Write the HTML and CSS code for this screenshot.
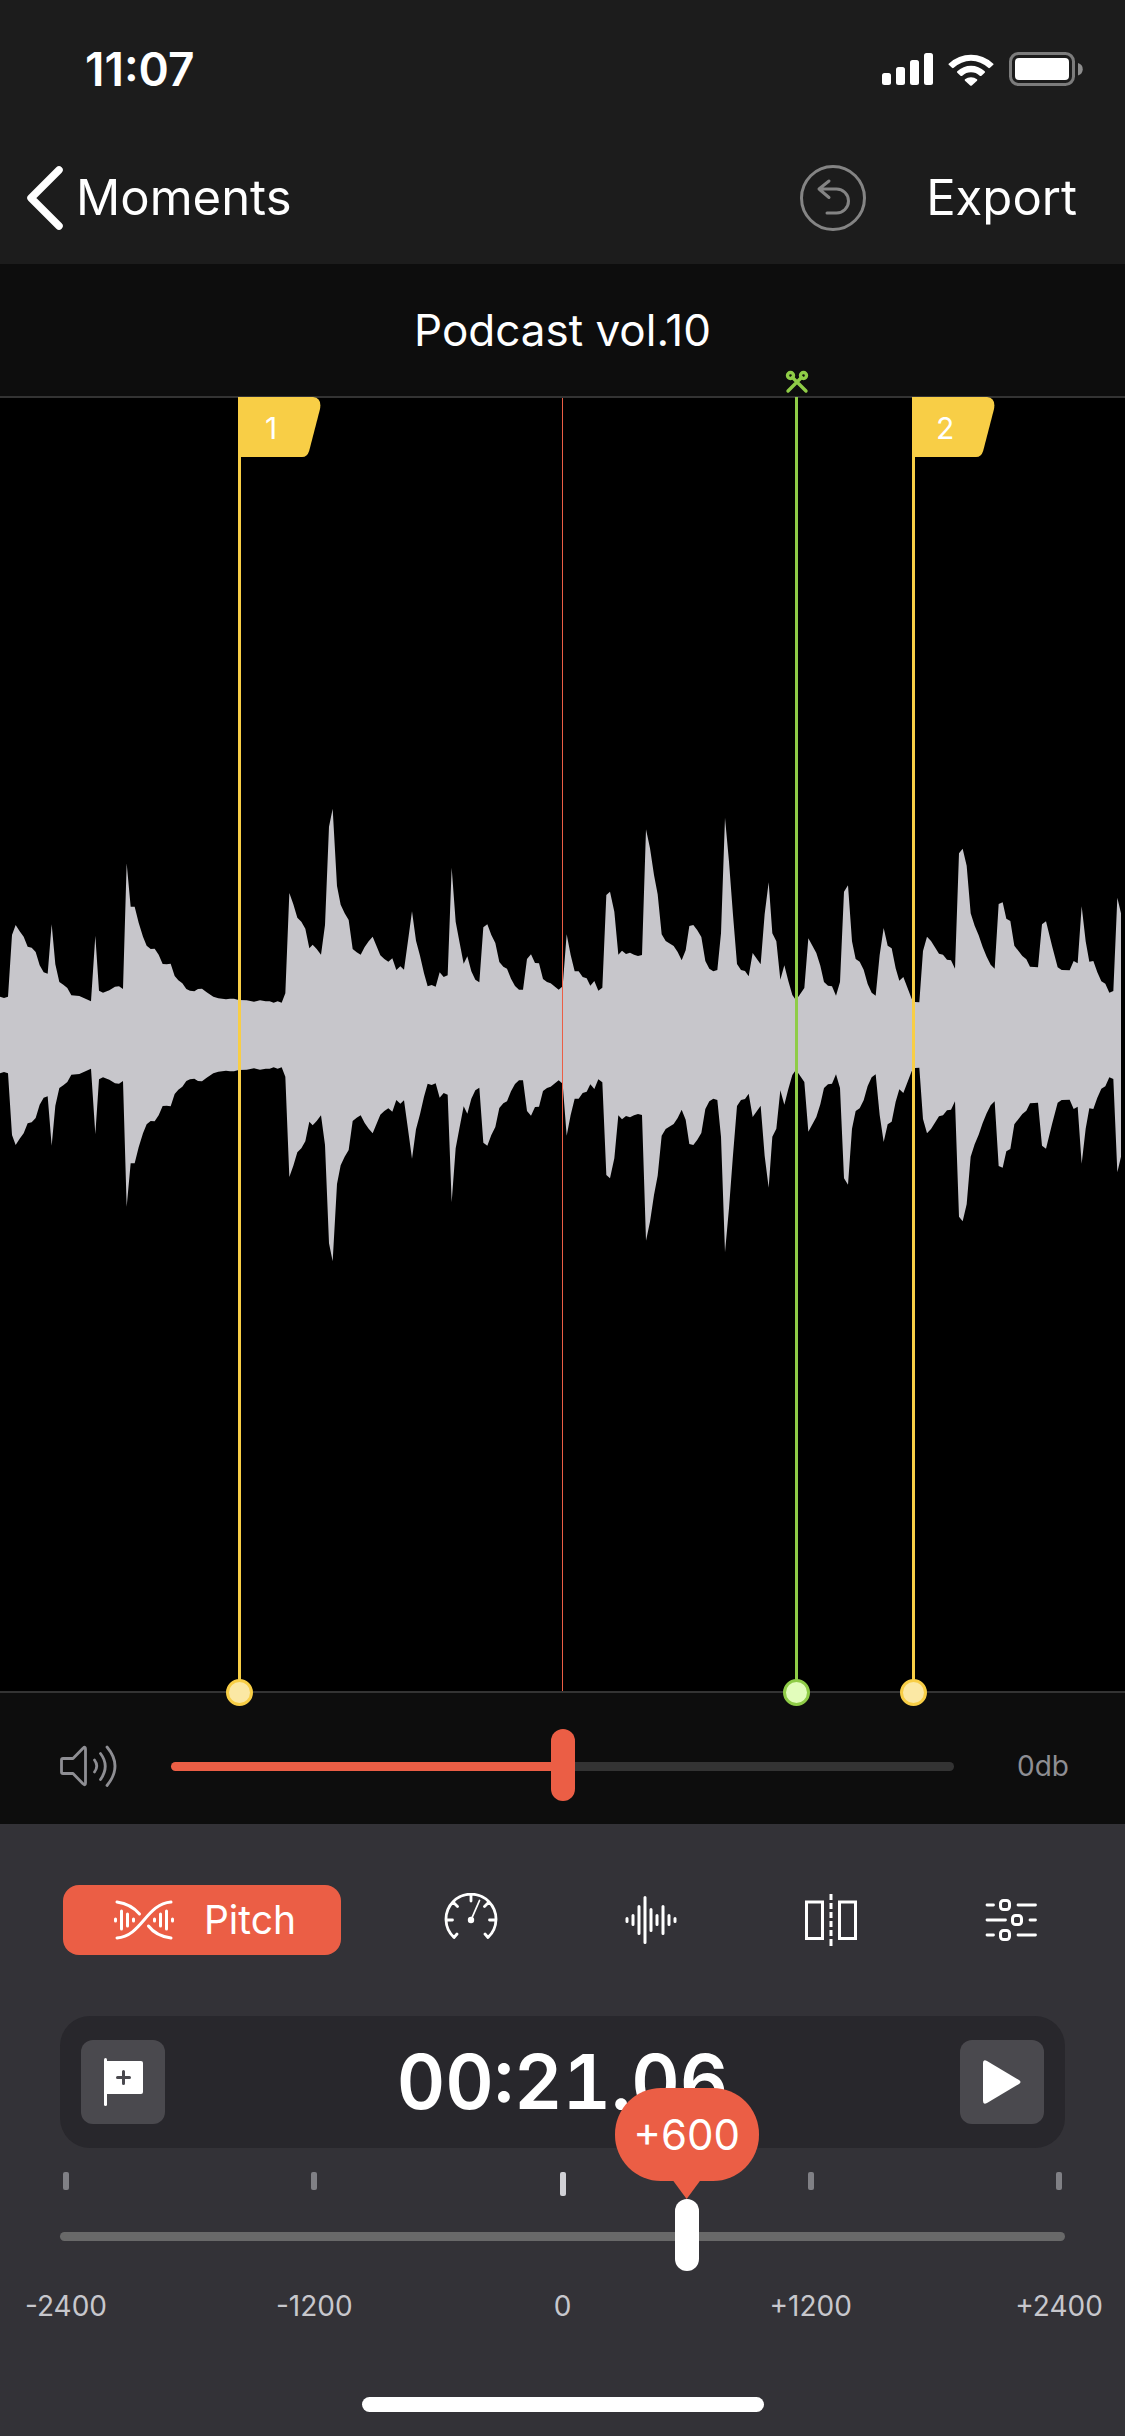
FILE: index.html
```html
<!DOCTYPE html>
<html lang="en">
<head>
<meta charset="utf-8">
<meta name="viewport" content="width=device-width, initial-scale=1">
<title>Podcast vol.10</title>
<link rel="stylesheet" href="styles.css">
</head>
<body>
<div class="app">
  <header class="top">
    <div class="status">
      <span class="clock">11:07</span>
      <div class="status-icons">
        <svg width="51" height="32" viewBox="0 0 51 32" fill="#fff" aria-hidden="true">
          <rect x="0" y="20" width="9" height="12" rx="2.5"/><rect x="14" y="14" width="9" height="18" rx="2.5"/><rect x="28" y="7" width="9" height="25" rx="2.5"/><rect x="42" y="0" width="9" height="32" rx="2.5"/>
        </svg>
        <svg width="46" height="33" viewBox="0 0 46 33" fill="#fff" aria-hidden="true">
          <path d="M1 10.500A32 32 0 0 1 45 10.500Q46 11.200 45 12L42 14.800Q41 15.500 40.300 14.800A25 25 0 0 0 5.700 14.800Q5 15.500 4 14.800L1 12Q0 11.200 1 10.500Z"/>
          <path d="M9.300 18.300A20 20 0 0 1 36.700 18.300Q37.500 19 36.700 19.800L33.500 22.700Q32.500 23.500 31.700 22.700A13 13 0 0 0 14.300 22.700Q13.500 23.500 12.500 22.700L9.300 19.800Q8.500 19 9.300 18.300Z"/>
          <path d="M17 26.300A9.500 9.500 0 0 1 29 26.300Q29.800 27 29 27.800L23.800 32.400Q23 33 22.200 32.400L17 27.800Q16.200 27 17 26.300Z"/>
        </svg>
        <svg width="74" height="34" viewBox="0 0 74 34" aria-hidden="true">
          <rect x="1.500" y="1.500" width="63" height="31" rx="8" fill="none" stroke="#7c7c7c" stroke-width="3"/><rect x="6" y="6" width="54" height="22" rx="4" fill="#fff"/><path d="M69 11a6.500 6.500 0 0 1 0 12.500Z" fill="#8d8d8d"/>
        </svg>
      </div>
    </div>
    <nav class="nav">
      <a class="back" href="#">
        <svg width="38" height="64" viewBox="0 0 38 64" fill="none" stroke="#fff" stroke-width="7.500" stroke-linecap="round" stroke-linejoin="round" aria-hidden="true"><path d="M33 4L5 32L33 60"/></svg>
        <span>Moments</span>
      </a>
      <div class="nav-actions">
        <button class="undo" type="button" aria-label="Undo">
          <svg width="66" height="66" viewBox="0 0 66 66" fill="none" stroke="#848484" stroke-width="3" stroke-linecap="round" stroke-linejoin="round"><circle cx="33" cy="33" r="31.500"/><path d="M29 16L19 24L29 32.500M19 24H36.500A12 12 0 0 1 36.500 48H27"/></svg>
        </button>
        <button class="export" type="button">Export</button>
      </div>
    </nav>
  </header>

  <h1 class="title">Podcast vol.10</h1>

  <main class="wave">
    <svg class="wave-shape" viewBox="0 0 3375 3879" preserveAspectRatio="none" fill="#c7c6cb" aria-hidden="true">
      <defs>
        <polygon id="envelope" points="0,766 0,650 12,654 24,650 36,465 47,435 59,454 71,470 83,500 95,503 107,516 119,556 131,577 143,581 155,433 166,553 178,606 190,614 202,624 214,646 238,648 273,664 286,467 297,632 309,638 328,631 345,620 357,619 369,627 380,250 392,380 404,380 416,428 429,470 440,497 452,507 464,506 476,524 488,552 500,553 512,551 524,588 535,601 547,610 559,627 570,632 583,634 594,627 606,626 620,637 640,650 655,655 678,658 690,656 702,656 716,660 740,661 762,665 780,661 797,664 809,664 821,668 833,664 845,668 856,640 868,339 880,373 892,413 904,425 916,446 928,505 938,494 950,507 963,524 975,435 987,140 998,86 1011,318 1022,374 1034,400 1046,420 1058,507 1070,517 1082,524 1094,501 1106,484 1118,470 1141,526 1153,537 1165,545 1177,535 1189,570 1201,559 1212,569 1224,482 1236,394 1248,482 1260,527 1272,580 1283,619 1295,615 1307,620 1319,577 1331,591 1343,586 1355,263 1367,425 1379,489 1391,551 1402,529 1414,574 1426,599 1438,607 1450,442 1462,433 1474,465 1486,489 1498,546 1510,560 1521,566 1533,596 1545,618 1557,629 1569,629 1581,537 1593,523 1605,549 1617,550 1629,597 1641,606 1652,610 1676,629 1688,619 1700,463 1712,525 1724,574 1736,574 1748,591 1760,595 1771,617 1783,603 1795,632 1807,623 1819,345 1830,335 1843,395 1855,524 1866,512 1878,522 1890,518 1902,524 1914,528 1926,525 1938,148 1950,205 1962,285 1973,343 1985,463 1997,483 2021,498 2033,516 2045,541 2057,511 2068,438 2080,435 2092,451 2104,471 2116,543 2128,566 2140,574 2152,570 2163,460 2175,113 2187,245 2199,405 2211,552 2223,570 2235,573 2246,589 2258,519 2282,553 2294,402 2306,307 2317,460 2329,484 2341,599 2353,556 2365,603 2377,645 2385,656 2395,650 2413,624 2425,475 2449,519 2461,557 2472,606 2484,617 2496,619 2508,647 2520,606 2532,335 2544,316 2556,484 2567,537 2579,545 2591,569 2603,612 2615,638 2627,647 2639,525 2651,444 2663,497 2675,505 2687,565 2698,602 2710,591 2735,656 2745,666 2758,667 2769,513 2781,470 2793,483 2817,521 2829,524 2841,539 2853,541 2865,566 2877,220 2888,206 2900,257 2912,400 2924,437 2936,466 2948,501 2960,530 2972,554 2984,566 2996,372 3008,367 3019,416 3031,423 3043,497 3067,528 3079,538 3090,560 3114,562 3126,433 3138,424 3156,497 3173,562 3185,570 3209,571 3221,543 3233,550 3245,379 3257,484 3268,545 3280,543 3292,577 3304,604 3316,611 3328,638 3340,633 3352,353 3363,400 3363,766"/>
      </defs>
      <use href="#envelope" transform="translate(0 1146)"/>
      <use href="#envelope" transform="translate(0 2676) scale(1 -1)"/>
    </svg>
    <div class="playhead"></div>
    <div class="marker moment" style="left:21.16%">
      <svg class="flag" width="83" height="60" viewBox="0 0 84 60" preserveAspectRatio="none" aria-hidden="true"><path d="M0 0H76Q85 1 83 12L72 54Q70 60 65 60H0Z" fill="#f8ce46"/></svg>
      <span class="flag-number">1</span>
    </div>
    <div class="marker cut" style="left:70.67%">
      <svg class="scissors" width="24" height="24" viewBox="0 0 24 24" fill="none" stroke="#8fcc47" stroke-width="3.400" stroke-linecap="round" aria-hidden="true"><circle cx="5.500" cy="5.500" r="3"/><circle cx="18.500" cy="5.500" r="3"/><path d="M7.500 7.500L21 21M16.500 7.500L3 21"/></svg>
    </div>
    <div class="marker moment" style="left:81.07%">
      <svg class="flag" width="83" height="60" viewBox="0 0 84 60" preserveAspectRatio="none" aria-hidden="true"><path d="M0 0H76Q85 1 83 12L72 54Q70 60 65 60H0Z" fill="#f8ce46"/></svg>
      <span class="flag-number">2</span>
    </div>
  </main>

  <section class="volume">
    <label for="volume" aria-label="Volume">
      <svg width="57" height="42" viewBox="0 0 57 42" fill="none" stroke="#8e8e93" stroke-width="2.800" stroke-linecap="round" stroke-linejoin="round"><path d="M3 13.500H13L23 3.200Q25.500 1 25.500 4V38Q25.500 41 23 38.800L13 28.500H3Q1.500 28.500 1.500 27V15Q1.500 13.500 3 13.500Z"/><path d="M34.500 15Q39 21 34.500 27M40.500 8.500Q50 21 40.500 34.500M47 2Q63 21 47 40.500"/></svg>
    </label>
    <input id="volume" class="range range-volume" type="range" min="0" max="100" value="50">
    <output class="db" for="volume">0db</output>
  </section>

  <section class="editor">
    <div class="tools">
      <button class="tool tool-active" type="button">
        <svg width="60" height="42" viewBox="0 0 60 42" fill="none" stroke="#fff" stroke-width="3" stroke-linecap="round" aria-hidden="true"><path d="M3 3Q17 5 25.500 15M3 39C28 37 32 5 57 3M57 39Q42 37 34.500 27M1.500 20V22M7.500 12V30M13.500 15V27M19.500 20V22M40.500 20V22M46.500 15V27M52.500 12V30M58.500 20V22"/></svg>
        <span>Pitch</span>
      </button>
      <button class="tool" type="button" aria-label="Speed">
        <svg width="54" height="54" viewBox="0 0 54 54" fill="none" stroke="#fff" stroke-width="2.800" stroke-linecap="round" stroke-linejoin="round"><path d="M13 41L10 44.500A25 25 0 1 1 44 44.500L41 41M2 27H8.500M52 27H45.500M27 2V8M9.500 9.500L13.500 13.500M44.500 9.500L40.500 13.500"/><path d="M27 27L35.500 7.500" stroke-width="1.800"/><circle cx="27" cy="27" r="3.200" fill="#fff" stroke="none"/></svg>
      </button>
      <button class="tool" type="button" aria-label="Volume envelope">
        <svg width="54" height="54" viewBox="0 0 54 54" fill="none" stroke="#fff" stroke-width="3" stroke-linecap="round"><path d="M3 25.500V28.500M9 22.500V31.500M15 13.500V40.500M21 4.500V49.500M27 16.500V37.500M33 22.500V31.500M39 13.500V40.500M45 22.500V31.500M51 25.500V28.500"/></svg>
      </button>
      <button class="tool" type="button" aria-label="Split">
        <svg width="54" height="54" viewBox="0 0 54 54" fill="none" stroke="#fff" stroke-width="3"><rect x="2.500" y="9" width="16" height="36.500"/><rect x="35.500" y="9" width="16" height="36.500"/><path d="M27 1V7M27 10V16M27 19V25M27 28V34M27 37V43M27 46V53"/></svg>
      </button>
      <button class="tool" type="button" aria-label="Equalizer">
        <svg width="54" height="54" viewBox="0 0 54 54" fill="none" stroke="#fff" stroke-width="2.800" stroke-linecap="round"><path d="M3 12H9.500M34 12H51.500M3 27H21.500M46 27H51.500M3 42H9.500M34 42H51.500"/><g stroke-width="3"><rect x="16.500" y="7.500" width="9" height="9" rx="3"/><rect x="28.500" y="22.500" width="9" height="9" rx="3"/><rect x="16.500" y="37.500" width="9" height="9" rx="3"/></g></svg>
      </button>
    </div>

    <div class="transport">
      <button class="square" type="button" aria-label="Add moment">
        <svg width="36" height="48" viewBox="0 0 36 48" aria-hidden="true"><rect x="-1" y="0" width="3" height="48" rx="1.500" fill="#fff"/><path d="M0 3H36Q38 3 38 5V34Q38 36 36 36H0Z" fill="#fff"/><path d="M12.500 19.500H24.500M18.500 13.500V25.500" stroke="#4a494e" stroke-width="3" stroke-linecap="round"/></svg>
      </button>
      <time class="time">00:21.06</time>
      <button class="square" type="button" aria-label="Play">
        <svg class="play" width="38" height="44" viewBox="0 0 38 44" fill="#fff" aria-hidden="true"><path d="M0 3Q0-1 4 1L36 20Q39 22 36 24L4 43Q0 45 0 41Z"/></svg>
      </button>
    </div>

    <div class="ticks"><i></i><i></i><i class="tick-zero"></i><i></i><i></i></div>

    <div class="pitch">
      <span class="pitch-track"></span>
      <input class="range range-pitch" type="range" min="-2400" max="2400" step="1" value="600" aria-label="Pitch in cents">
      <div class="bubble-rail"><output class="bubble" style="left:62.5%">+600</output></div>
    </div>

    <div class="scale"><span>-2400</span><span>-1200</span><span>0</span><span>+1200</span><span>+2400</span></div>
    <div class="home"></div>
  </section>
</div>
</body>
</html>
```
FILE: styles.css
```css
*,
*::before,
*::after {
  box-sizing: border-box;
}

body {
  margin: 0;
  background: #0d0d0d;
  color: #fff;
  font-family: Inter, "Liberation Sans", sans-serif;
}

button {
  margin: 0;
  padding: 0;
  border: 0;
  background: none;
  color: inherit;
  font: inherit;
}

svg {
  display: block;
  flex: none;
}

.app {
  display: flex;
  flex-direction: column;
  min-height: 100vh;
}

.top {
  background: #1c1c1c;
}

.status {
  display: flex;
  align-items: center;
  justify-content: space-between;
  height: 132px;
  padding: 6px 42px 0 85px;
}

.clock {
  font-size: 46px;
  font-weight: 600;
  line-height: 56px;
}

.status-icons {
  display: flex;
  align-items: center;
  gap: 15px;
}

.nav {
  display: flex;
  align-items: center;
  justify-content: space-between;
  height: 132px;
  padding: 0 48px 0 26px;
  font-size: 49px;
  line-height: 60px;
}

.back {
  display: flex;
  align-items: center;
  gap: 12px;
  color: #fff;
  text-decoration: none;
}

.nav-actions {
  display: flex;
  align-items: center;
  gap: 60px;
}

.title {
  display: flex;
  align-items: center;
  justify-content: center;
  height: 132px;
  margin: 0;
  font-size: 44px;
  font-weight: 400;
  line-height: 56px;
}

.wave {
  position: relative;
  flex: 1;
  min-height: 600px;
  border-top: 2px solid #333;
  border-bottom: 2px solid #333;
  background: #000;
}

.wave-shape {
  position: absolute;
  inset: 0;
  width: 100%;
  height: 100%;
}

.playhead {
  position: absolute;
  top: 0;
  bottom: 0;
  left: calc(50% - 1px);
  width: 1px;
  background: #eb5e45;
}

.marker {
  position: absolute;
  top: -1px;
  bottom: 0;
  width: 3px;
  background: currentColor;
}

.moment {
  color: #f8ce46;
}

.cut {
  color: #8fcc47;
}

.marker::after {
  content: "";
  position: absolute;
  bottom: -15px;
  left: -12px;
  width: 27px;
  height: 27px;
  border: 3px solid currentColor;
  border-radius: 50%;
  background: #fbe8a4;
}

.cut::after {
  background: #e2fdbb;
}

.flag {
  position: absolute;
  top: 0;
  left: 0;
}

.flag-number {
  position: absolute;
  top: 0;
  left: 0;
  width: 66px;
  color: #fff;
  font-size: 30px;
  line-height: 62px;
  text-align: center;
}

.scissors {
  position: absolute;
  top: -27px;
  left: -10px;
}

.volume {
  display: flex;
  align-items: center;
  height: 131px;
  padding: 15px 56px 0 60px;
}

.range {
  -webkit-appearance: none;
  appearance: none;
  display: block;
  height: 9px;
  margin: 0;
  border-radius: 5px;
  background: transparent;
}

.range::-webkit-slider-runnable-track {
  height: 9px;
}

.range::-webkit-slider-thumb {
  -webkit-appearance: none;
  width: 24px;
  height: 72px;
  margin-top: -33px;
  border-radius: 12px;
  background: #fff;
}

.range-volume {
  flex: 1;
  min-width: 0;
  margin-left: 54px;
  background: linear-gradient(to right, #eb5e45 50%, #333 50%);
}

.range-volume::-webkit-slider-thumb {
  background: #eb5e45;
}

.db {
  width: 115px;
  color: #8e8e93;
  font-size: 28px;
  line-height: 36px;
  text-align: right;
}

.editor {
  padding: 61px 0 24px;
  background: #333237;
}

.tools {
  display: flex;
  align-items: center;
  padding: 0 24px 0 63px;
}

.tool {
  display: flex;
  flex: 1;
  align-items: center;
  justify-content: center;
  height: 70px;
}

.tool-active {
  flex: none;
  gap: 30px;
  width: 278px;
  margin-right: 40px;
  padding-left: 6px;
  border-radius: 16px;
  background: #eb5e45;
  font-size: 39px;
  line-height: 48px;
}

.transport {
  display: flex;
  align-items: center;
  justify-content: space-between;
  margin: 61px 60px 0;
  padding: 24px 21px;
  border-radius: 30px;
  background: #28272c;
}

.square {
  display: flex;
  align-items: center;
  justify-content: center;
  width: 84px;
  height: 84px;
  border-radius: 12px;
  background: #4a494e;
}

.square svg {
  overflow: visible;
}

.time {
  font-size: 75px;
  font-weight: 600;
  font-variant-numeric: tabular-nums;
  line-height: 84px;
}

.ticks {
  display: flex;
  justify-content: space-between;
  height: 24px;
  margin: 24px 63px 0;
}

.ticks i {
  width: 6px;
  height: 18px;
  border-radius: 2px;
  background: #808085;
}

.ticks .tick-zero {
  height: 24px;
  background: #d1d1d6;
}

.pitch {
  position: relative;
  display: grid;
  margin: 36px 54px 0;
}

.pitch-track {
  grid-area: 1 / 1;
  height: 9px;
  margin: 0 6px;
  border-radius: 5px;
  background: #696969;
}

.range-pitch {
  position: relative;
  grid-area: 1 / 1;
  width: 100%;
}

.bubble-rail {
  position: absolute;
  bottom: 60px;
  left: 12px;
  right: 12px;
}

.bubble {
  position: absolute;
  bottom: 0;
  width: 144px;
  margin-left: -72px;
  border-radius: 46px;
  background: #eb5e45;
  font-size: 42px;
  line-height: 93px;
  text-align: center;
}

.bubble::after {
  content: "";
  position: absolute;
  top: 92px;
  left: 58px;
  width: 28px;
  height: 19px;
  background: #eb5e45;
  clip-path: polygon(0 0, 100% 0, 50% 100%);
}

.scale {
  display: flex;
  justify-content: space-between;
  margin: 47px 6px 0;
  color: #c7c7cc;
  font-size: 28px;
  line-height: 36px;
}

.scale span {
  width: 120px;
  text-align: center;
}

.home {
  width: 402px;
  height: 15px;
  margin: 73px auto 0;
  border-radius: 8px;
  background: #fff;
}
```
